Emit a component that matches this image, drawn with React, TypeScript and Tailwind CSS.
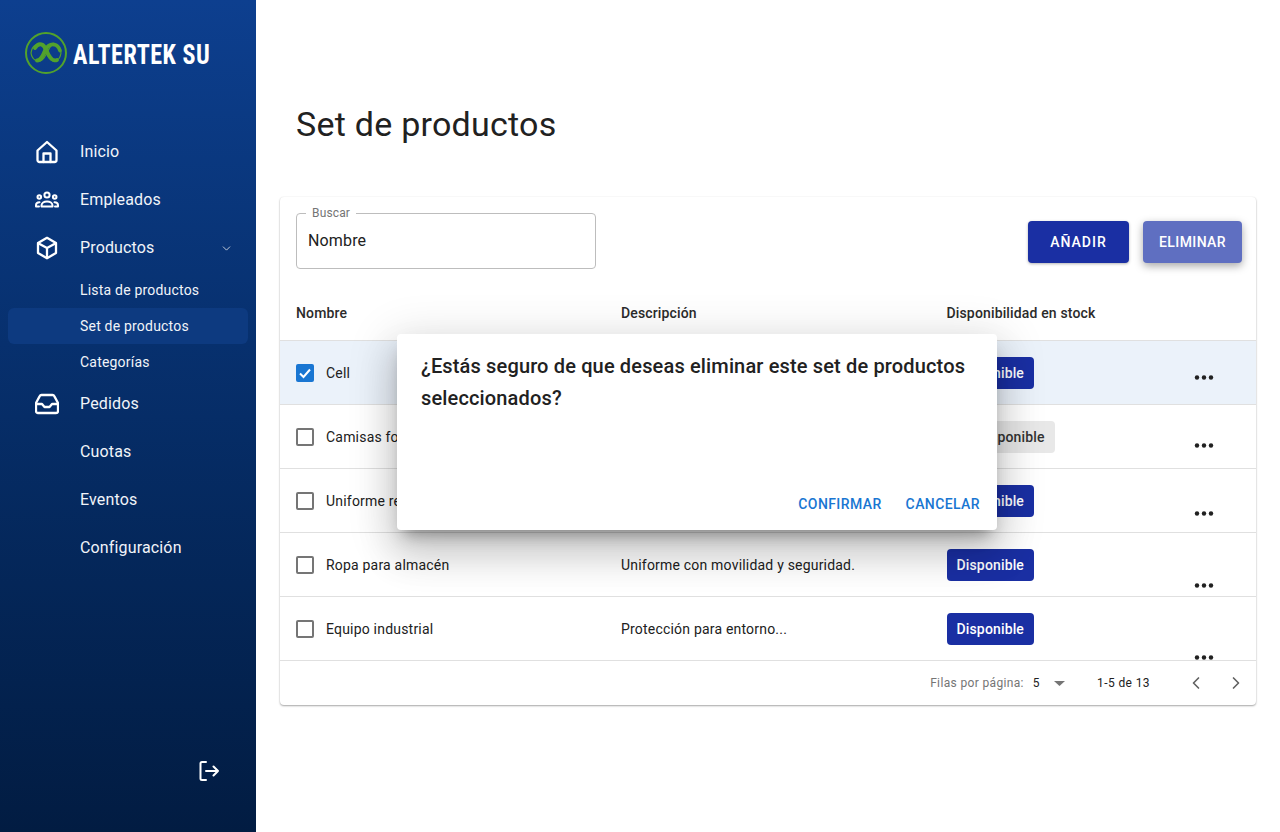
import React from "react";
import { ChevronDown, ChevronLeft, ChevronRight } from "lucide-react";

function Home() {
  return (
    <svg width="24" height="24" viewBox="0 0 24 24" fill="none" stroke="#fff" strokeWidth="2.3" strokeLinecap="round" strokeLinejoin="round">
      <path d="M2.500 10.500 12 2l9.500 8.500V20a2 2 0 0 1-2 2h-15a2 2 0 0 1-2-2Z" />
      <path d="M8.500 22v-8.500h7V22" />
    </svg>
  );
}
function People() {
  return (
    <svg width="24" height="24" viewBox="0 0 24 24" fill="none" stroke="#fff" strokeWidth="2" strokeLinecap="round" strokeLinejoin="round">
      <circle cx="12" cy="7" r="2.600" />
      <circle cx="4.300" cy="9" r="1.800" />
      <circle cx="19.700" cy="9" r="1.800" />
      <path d="M6.500 18.500v-1a5.500 4 0 0 1 11 0v1Z" />
      <path d="M1 18.500v-1.500a3.500 3 0 0 1 3.500-2.800M23 18.500v-1.500a3.500 3 0 0 0-3.500-2.800M1 18.500h3M20 18.500h3" />
    </svg>
  );
}
function Box() {
  return (
    <svg width="24" height="24" viewBox="0 0 24 24" fill="none" stroke="#fff" strokeWidth="2.300" strokeLinecap="round" strokeLinejoin="round">
      <path d="M12 1.800 21 7v10l-9 5.200L3 17V7Z" />
      <path d="M3.300 7.200 12 12l8.700-4.800M12 12v10" />
    </svg>
  );
}
function Inbox() {
  return (
    <svg width="24" height="24" viewBox="0 0 24 24" fill="none" stroke="#fff" strokeWidth="2.300" strokeLinecap="round" strokeLinejoin="round">
      <path d="M6.500 3h11a2 2 0 0 1 1.800 1.100L23 11v8a2 2 0 0 1-2 2H3a2 2 0 0 1-2-2v-8l3.700-6.900A2 2 0 0 1 6.500 3Z" />
      <path d="M1 12h6l2.500 3h5L17 12h6" />
    </svg>
  );
}
function Logo() {
  return (
    <svg width="44" height="44" viewBox="0 0 44 44" fill="none">
      <circle cx="22" cy="22" r="20" stroke="#52a22c" strokeWidth="2" />
      <path d="M7 22c1-8 7-11 11-7 3 3 5 11 9 14 4 3 9 0 10-7-1-8-6-11-10-7-3 3-5 11-9 14-4 3-10 0-11-7Z" stroke="#52a22c" strokeWidth="1.200" />
      <path d="M11 17c2-3.500 5-4.500 8-3 3 2 4 8 7 12 2 3 5 4 7 3M13 29.500c4 0 6-5 8-10 2-4 5-6.500 9-6 3 .5 5 3 6 6" stroke="#52a22c" strokeWidth="3.800" strokeLinecap="round" />
    </svg>
  );
}

function NavItem({ icon, label, chevron }: { icon?: React.ReactNode; label: string; chevron?: boolean }) {
  return (
    <div className="h-12 flex items-center pl-[35px] pr-[23px] text-[16px] tracking-[0.15px] text-[#f1f4f9]">
      <span className="w-[45px] flex items-center">{icon}</span>
      <span className="flex-1">{label}</span>
      {chevron && <ChevronDown size={13} strokeWidth={1.5} color="#e5e7eb" />}
    </div>
  );
}

function SubItem({ label, active }: { label: string; active?: boolean }) {
  return (
    <div className={`h-9 mx-2 rounded-md flex items-center pl-[72px] text-[14px] tracking-[0.2px] text-[#f1f4f9] ${active ? "bg-[#0d3a80]" : ""}`}>
      {label}
    </div>
  );
}

function Check({ on }: { on?: boolean }) {
  return on ? (
    <svg width="18" height="18" viewBox="0 0 18 18" className="shrink-0">
      <rect width="18" height="18" rx="2" fill="#1976d2" />
      <path d="M4 9.500 7.500 13 14 5.500" fill="none" stroke="#fff" strokeWidth="2" />
    </svg>
  ) : (
    <span className="block w-[18px] h-[18px] rounded-[2px] border-2 border-[#757575] shrink-0" />
  );
}

function Chip({ off }: { off?: boolean }) {
  return (
    <span className={`inline-flex h-8 items-center px-[10px] rounded text-[14px] tracking-[0.15px] font-medium ${off ? "bg-[#e8e8e8] text-[#333333]" : "bg-[#1a2fa3] text-white"}`}>
      {off ? "No disponible" : "Disponible"}
    </span>
  );
}

const rows = [
  { name: "Cell", desc: "", on: true, dot: "mt-[8px]" },
  { name: "Camisas formales", desc: "", off: true, dot: "mt-[16px]" },
  { name: "Uniforme resistente", desc: "", dot: "mt-[24px]" },
  { name: "Ropa para almacén", desc: "Uniforme con movilidad y seguridad.", dot: "mt-[40px]" },
  { name: "Equipo industrial", desc: "Protección para entorno...", dot: "mt-[56px]" },
];

export default function App() {
  return (
    <div className="font-['Roboto',sans-serif] relative flex w-[1280px] h-[832px] overflow-hidden bg-white text-[#212121]">
      <aside className="w-[256px] shrink-0 flex flex-col bg-gradient-to-b from-[#0d3f8f] to-[#021c42]">
        <div className="h-[105px] pl-[24px] pt-[31px] flex items-start gap-[5px]">
          <Logo />
          <span className="mt-[7px] origin-left scale-x-[0.86] text-[28px] leading-[34px] font-bold text-white tracking-[0.6px] font-['Roboto_Condensed','Liberation_Sans',sans-serif] whitespace-nowrap">ALTERTEK SU</span>
        </div>
        <nav className="mt-[23px] flex flex-col">
          <NavItem icon={<Home />} label="Inicio" />
          <NavItem icon={<People />} label="Empleados" />
          <NavItem icon={<Box />} label="Productos" chevron />
          <SubItem label="Lista de productos" />
          <SubItem label="Set de productos" active />
          <SubItem label="Categorías" />
          <NavItem icon={<Inbox />} label="Pedidos" />
          <NavItem label="Cuotas" />
          <NavItem label="Eventos" />
          <NavItem label="Configuración" />
        </nav>
        <div className="mt-auto mb-[49px] pr-[35px] flex justify-end">
          <svg width="24" height="24" viewBox="0 0 24 24" fill="none" stroke="#fff" strokeWidth="2" strokeLinecap="round" strokeLinejoin="round">
            <path d="M9 3H5a1.500 1.500 0 0 0-1.500 1.500v15A1.500 1.500 0 0 0 5 21h4M9 12h12M16.500 7.500 21 12l-4.500 4.500" />
          </svg>
        </div>
      </aside>

      <main className="flex-1 flex flex-col px-[24px]">
        <h1 className="mt-[100px] ml-[16px] text-[34px] leading-[48px] tracking-[0.25px] text-[#212121]">Set de productos</h1>
        <section className="mt-[49px] rounded bg-white shadow-[0_1px_2px_rgba(0,0,0,0.35),0_0_2px_rgba(0,0,0,0.06)]">
          <div className="h-[88px] flex items-start px-[16px] pt-[16px]">
            <div className="relative w-[300px] h-[56px] rounded border border-[#bdbdbd] flex items-center pl-[11px] text-[16px] tracking-[0.15px]">
              Nombre
              <span className="absolute -top-[8px] left-[9px] bg-white px-[6px] text-[12px] leading-[14px] text-[#757575]">Buscar</span>
            </div>
            <div className="ml-auto mr-[-2px] mt-[8px] flex gap-[14px]">
              <button className="h-[42px] w-[101px] rounded bg-[#1a2fa3] text-white text-[14px] font-medium tracking-[1px] shadow-[0_1px_3px_rgba(0,0,0,0.3)]">AÑADIR</button>
              <button className="h-[42px] w-[99px] rounded bg-[#5f6fc1] text-white text-[14px] font-medium tracking-[0.4px] shadow-[0_3px_8px_rgba(0,0,0,0.35)]">ELIMINAR</button>
            </div>
          </div>
          <div className="grid grid-cols-[325px_325.500px_1fr] h-[56px] pt-px items-center px-[16px] border-b border-[#e0e0e0] text-[14px] font-medium tracking-[0.15px] text-[#2b2b2b]">
            <span>Nombre</span>
            <span>Descripción</span>
            <span>Disponibilidad en stock</span>
          </div>
          {rows.map((r) => (
            <div key={r.name} className={`grid grid-cols-[325px_325.500px_1fr] h-[64px] pt-px items-center pl-[16px] border-b border-[#e0e0e0] text-[14px] tracking-[0.2px] overflow-hidden ${r.on ? "bg-[#ebf2fa]" : ""}`}>
              <div className="flex items-center gap-[12px]">
                <Check on={r.on} />
                <span>{r.name}</span>
              </div>
              <span>{r.desc}</span>
              <div className="flex items-center justify-between pr-[42px]">
                <Chip off={r.off} />
                <svg width="20" height="5" viewBox="0 0 20 5" className={r.dot} fill="#212121">
                  <circle cx="3" cy="2.500" r="2.200" />
                  <circle cx="10" cy="2.500" r="2.200" />
                  <circle cx="17" cy="2.500" r="2.200" />
                </svg>
              </div>
            </div>
          ))}
          <div className="h-[44px] flex items-center justify-end pr-[10px] text-[12px] tracking-[0.4px]">
            <span className="text-[#757575] tracking-[0.35px]">Filas por página:</span>
            <span className="ml-[9px] text-[#212121]">5</span>
            <svg width="11" height="5" viewBox="0 0 11 5" className="ml-[14px]" fill="#757575"><path d="M0 0h11L5.500 5Z" /></svg>
            <span className="ml-[32px] text-[#212121]">1-5 de 13</span>
            <ChevronLeft size={20} strokeWidth={2} color="#616161" className="ml-[36px]" />
            <ChevronRight size={20} strokeWidth={2} color="#616161" className="ml-[20px]" />
          </div>
        </section>
      </main>

      <div className="absolute left-[397px] top-[334px] w-[600px] h-[196px] rounded bg-white shadow-[0_11px_15px_-7px_rgba(0,0,0,0.35),0_24px_38px_3px_rgba(0,0,0,0.14),0_9px_46px_8px_rgba(0,0,0,0.12)] flex flex-col">
        <h2 className="px-[24px] pt-[16px] text-[20px] leading-[32px] font-medium tracking-[0.15px] text-[#212121]">¿Estás seguro de que deseas eliminar este set de productos seleccionados?</h2>
        <div className="mt-auto h-[52px] flex items-center justify-end gap-[24px] pr-[17px] text-[14px] font-medium tracking-[0.4px] text-[#1976d2]">
          <span>CONFIRMAR</span>
          <span>CANCELAR</span>
        </div>
      </div>
    </div>
  );
}
